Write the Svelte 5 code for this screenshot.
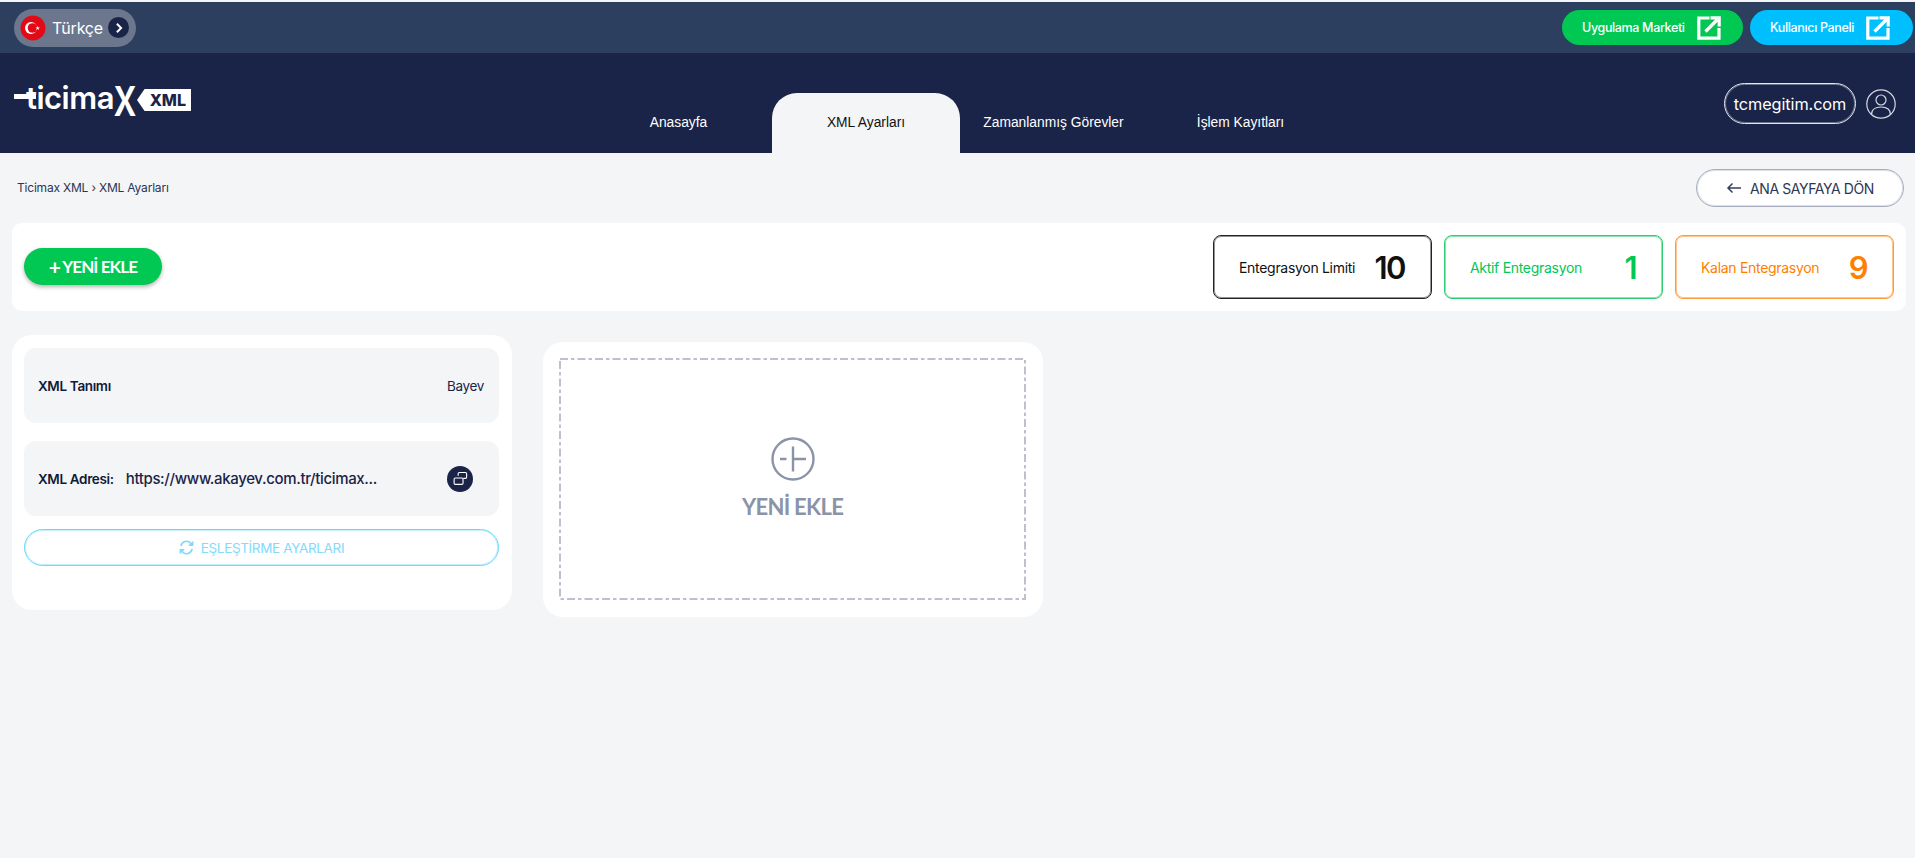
<script>
  const tabs = [
    { label: 'Anasayfa', active: false },
    { label: 'XML Ayarları', active: true },
    { label: 'Zamanlanmış Görevler', active: false },
    { label: 'İşlem Kayıtları', active: false }
  ];
  const stats = [
    { label: 'Entegrasyon Limiti', value: '10', tone: 'black' },
    { label: 'Aktif Entegrasyon', value: '1', tone: 'green' },
    { label: 'Kalan Entegrasyon', value: '9', tone: 'orange' }
  ];
</script>

<div class="page">
  <div class="topbar">
    <div class="lang">
      <svg class="flag" viewBox="0 0 26 26" aria-hidden="true">
        <circle cx="13" cy="13" r="12.5" fill="#e30a17" />
        <circle cx="11" cy="13" r="6" fill="#fff" />
        <circle cx="12.5" cy="13" r="4.8" fill="#e30a17" />
        <path d="M17.6 10.8l.6 1.6 1.7 0-1.3 1 .5 1.7-1.5-1-1.4 1 .5-1.7-1.3-1 1.7 0z" fill="#fff" />
      </svg>
      <span class="lang-name">Türkçe</span>
      <span class="lang-go">
        <svg viewBox="0 0 20 20" aria-hidden="true"><path d="M7 4l6 6-6 6" fill="none" stroke="#fff" stroke-width="2.8" /></svg>
      </span>
    </div>
    <div class="links">
      <a class="link market" href="#market">
        <span>Uygulama Marketi</span>
        <svg viewBox="0 0 24 24" aria-hidden="true"><path d="M12.500 2H1.800v20.200H22V12M8.500 15.500L21 3M13.500 1.800H22.200V10.500" fill="none" stroke="#fff" stroke-width="3.200" /></svg>
      </a>
      <a class="link panel" href="#panel">
        <span>Kullanıcı Paneli</span>
        <svg viewBox="0 0 24 24" aria-hidden="true"><path d="M12.500 2H1.800v20.200H22V12M8.500 15.500L21 3M13.500 1.800H22.200V10.500" fill="none" stroke="#fff" stroke-width="3.200" /></svg>
      </a>
    </div>
  </div>

  <header class="header">
    <div class="logo">
      <span class="logo-word">ticima<span class="logo-x">x</span></span>
      <span class="logo-tag">XML</span>
    </div>
    <nav class="tabs">
      {#each tabs as tab}
        <a class="tab" class:active={tab.active} href="#tab">{tab.label}</a>
      {/each}
    </nav>
    <div class="account">
      <span class="domain">tcmegitim.com</span>
      <svg class="user" viewBox="0 0 30 30" aria-hidden="true">
        <circle cx="15" cy="15" r="14.200" fill="none" stroke="#d5d8e0" stroke-width="1.200" />
        <circle cx="15" cy="11" r="5" fill="none" stroke="#d5d8e0" stroke-width="1.200" />
        <path d="M5.500 25.500c0-5 4-7.500 9.500-7.500s9.500 2.500 9.500 7.500" fill="none" stroke="#d5d8e0" stroke-width="1.200" />
      </svg>
    </div>
  </header>

  <main class="main">
    <div class="crumbs">
      <span class="trail">Ticimax XML › XML Ayarları</span>
      <button class="back">
        <svg viewBox="0 0 16 12" aria-hidden="true"><path d="M15 6H2M6.500 1.500L2 6l4.500 4.500" fill="none" stroke="#33405f" stroke-width="1.500" /></svg>
        ANA SAYFAYA DÖN
      </button>
    </div>

    <section class="toolbar">
      <button class="add"><span class="add-plus">+</span>YENİ EKLE</button>
      <div class="stats">
        {#each stats as stat}
          <div class="stat {stat.tone}">
            <span class="stat-label">{stat.label}</span>
            <span class="stat-value">{stat.value}</span>
          </div>
        {/each}
      </div>
    </section>

    <section class="cards">
      <article class="card info">
        <div class="row">
          <strong>XML Tanımı</strong>
          <span class="name">Bayev</span>
        </div>
        <div class="row second">
          <strong>XML Adresi:</strong>
          <span class="url">https://www.akayev.com.tr/ticimax...</span>
          <span class="copy">
            <svg viewBox="0 0 16 16" aria-hidden="true">
              <path d="M5.500 5V2.800c0-.7.500-1.200 1.200-1.200h6.600c.7 0 1.200.500 1.200 1.200v3.900c0 .7-.500 1.200-1.200 1.200H11" fill="none" stroke="#fff" stroke-width="1.200" />
              <rect x="1.200" y="7.500" width="9.500" height="6.800" rx="1.300" fill="none" stroke="#fff" stroke-width="1.200" />
            </svg>
          </span>
        </div>
        <button class="match">
          <svg viewBox="0 0 16 16" aria-hidden="true">
            <path d="M2 6.500A6 6 0 0 1 12.500 3.500L14.500 5.500M14.500 1.500v4h-4M14 9.500A6 6 0 0 1 3.500 12.500L1.500 10.500M1.500 14.500v-4h4" fill="none" stroke="#7fd9f9" stroke-width="1.800" />
          </svg>
          EŞLEŞTİRME AYARLARI
        </button>
      </article>

      <article class="card create">
        <div class="dropzone">
          <svg class="frame" viewBox="0 0 467 242" aria-hidden="true">
            <rect x="1" y="1" width="465" height="240" fill="none" stroke="#bcc1cd" stroke-width="2" stroke-dasharray="8 3 3.500 3" />
          </svg>
          <svg class="circle-plus" viewBox="0 0 44 44" aria-hidden="true">
            <circle cx="22" cy="22" r="20.500" fill="none" stroke="#8a93a8" stroke-width="2.400" />
            <path d="M22 9.500v25M9 22h6.500M22 22h13" fill="none" stroke="#8a93a8" stroke-width="2.400" />
          </svg>
          <span class="create-label">YENİ EKLE</span>
        </div>
      </article>
    </section>
  </main>
</div>

<style>
  :global(body) {
    margin: 0;
    background: #f4f5f7;
  }
  .page {
    height: 858px;
    overflow: hidden;
    background: #f4f5f7;
    font-family: Inter, "Noto Sans", sans-serif;
    color: #1a2448;
    padding-top: 2px;
    box-sizing: border-box;
  }
  a { text-decoration: none; }
  button { font-family: inherit; cursor: pointer; }

  .topbar {
    height: 51px;
    background: #2c3f5f;
    display: flex;
    justify-content: space-between;
    align-items: center;
    padding: 0 2px 0 14px;
    box-sizing: border-box;
  }
  .lang {
    width: 122px;
    height: 38px;
    border-radius: 19px;
    background: #6c778e;
    display: flex;
    align-items: center;
    padding: 0 7px 0 6px;
    box-sizing: border-box;
  }
  .flag { width: 26px; height: 26px; flex: none; }
  .lang-name {
    color: #fff;
    font-size: 16px;
    margin-left: 6px;
    flex: 1;
    letter-spacing: -0.2px;
  }
  .lang-go {
    width: 21px;
    height: 21px;
    border-radius: 50%;
    background: #1a2448;
    display: flex;
    align-items: center;
    justify-content: center;
  }
  .lang-go svg { width: 14px; height: 14px; }
  .links { display: flex; gap: 7px; }
  .link {
    height: 35px;
    border-radius: 18px;
    display: flex;
    align-items: center;
    color: #fff;
    font-size: 12.500px;
    font-weight: 500;
    letter-spacing: -0.35px;
    box-sizing: border-box;
    justify-content: space-between;
  }
  .link svg { width: 24px; height: 24px; }
  .market { width: 181px; background: #00c853; padding: 0 22px 0 20px; }
  .panel { width: 163px; background: #00bfff; padding: 0 23px 0 20px; }

  .header {
    height: 100px;
    background: #1a2448;
    position: relative;
    display: flex;
  }
  .logo {
    position: absolute;
    left: 14px;
    top: 32px;
    display: flex;
    align-items: flex-start;
  }
  .logo-word {
    position: relative;
    display: block;
    width: 123px;
    box-sizing: border-box;
    white-space: nowrap;
    color: #fff;
    font-weight: 600;
    font-size: 31px;
    line-height: 10px;
    letter-spacing: -0.5px;
    padding-left: 12px;
  }
  .logo-word::before {
    content: "";
    position: absolute;
    left: 0;
    top: 9px;
    width: 22px;
    height: 5px;
    background: #fff;
  }
  .logo-x {
    display: inline-block;
    font-size: 54px;
    font-weight: 500;
    line-height: 10px;
    margin: 0 -4px;
    transform: translateY(7px) scaleX(0.78);
  }
  .logo-tag {
    margin-top: 4px;
    width: 54px;
    height: 22px;
    background: #fff;
    color: #1a2448;
    font-size: 16px;
    font-weight: 800;
    line-height: 22px;
    text-align: right;
    padding-right: 5px;
    box-sizing: border-box;
    clip-path: polygon(14% 0, 100% 0, 100% 100%, 14% 100%, 0 50%);
  }
  .tabs {
    display: flex;
    margin: 40px 0 0 585px;
    height: 60px;
  }
  .tab {
    width: 187px;
    display: flex;
    align-items: center;
    justify-content: center;
    color: #fff;
    font-family: "Liberation Sans", Arial, sans-serif;
    font-size: 13.800px;
    padding-bottom: 2px;
    box-sizing: border-box;
    border-radius: 25px 25px 0 0;
  }
  .tab.active { width: 188px; background: #f4f5f7; color: #111; }
  .account {
    position: absolute;
    right: 19px;
    top: 30px;
    display: flex;
    align-items: center;
    gap: 10px;
  }
  .domain {
    width: 132px;
    height: 41px;
    border: 1px solid #e4e6ec;
    box-shadow: inset 0 0 0 1px rgba(228, 230, 236, 0.4);
    border-radius: 21px;
    box-sizing: border-box;
    color: #fff;
    font-size: 16.300px;
    display: flex;
    align-items: center;
    justify-content: center;
    letter-spacing: -0.1px;
  }
  .user { width: 30px; height: 30px; }

  .main { padding: 0 9px 0 12px; }
  .crumbs {
    height: 70px;
    display: flex;
    justify-content: space-between;
    align-items: center;
    padding: 0 2px 0 5px;
    font-size: 12px;
    letter-spacing: -0.2px;
    color: #2b3654;
  }
  .trail { margin-bottom: 2px; }
  .back {
    width: 208px;
    height: 38px;
    background: #fff;
    border: 1px solid #a9afc0;
    box-shadow: inset 0 0 0 1px rgba(169, 175, 192, 0.4);
    border-radius: 19px;
    display: flex;
    align-items: center;
    justify-content: center;
    gap: 8px;
    font-size: 14px;
    letter-spacing: -0.4px;
    color: #2b3654;
    padding: 0;
  }
  .back svg { width: 16px; height: 12px; }

  .toolbar {
    height: 88px;
    background: #fff;
    border-radius: 10px;
    display: flex;
    align-items: center;
    justify-content: space-between;
    padding: 0 12px;
  }
  .add {
    width: 138px;
    height: 37px;
    border: 0;
    border-radius: 19px;
    background: #00c853;
    color: #fff;
    font-family: Lato, sans-serif;
    font-weight: 700;
    font-size: 17px;
    letter-spacing: -0.9px;
    box-shadow: 0 2px 4px rgba(0, 0, 0, 0.3);
    display: flex;
    align-items: center;
    justify-content: center;
    padding: 0;
    margin-bottom: 1px;
  }
  .add-plus { font-size: 21px; margin-right: 2px; line-height: 1; font-weight: 700; }
  .stats { display: flex; gap: 12px; }
  .stat {
    width: 219px;
    height: 64px;
    border: 1px solid;
    box-shadow: inset 0 0 0 1px color-mix(in srgb, currentColor 45%, transparent);
    border-radius: 8px;
    box-sizing: border-box;
    display: flex;
    align-items: center;
    justify-content: space-between;
    background: #fff;
    padding: 0 26px 0 25px;
  }
  .stat-label { font-size: 14px; letter-spacing: -0.3px; }
  .stat-value { font-size: 31px; font-weight: 600; letter-spacing: -1.500px; }
  .black { border-color: #222; color: #111; }
  .green { border-color: #2ecb70; color: #00c853; }
  .orange { border-color: #ff9a3c; color: #ff8000; }

  .cards {
    display: flex;
    align-items: flex-start;
    gap: 31px;
    margin-top: 24px;
  }
  .card {
    width: 500px;
    background: #fff;
    border-radius: 20px;
    box-sizing: border-box;
  }
  .info {
    height: 275px;
    padding: 13px 13px 0 12px;
  }
  .create {
    height: 275px;
    margin-top: 7px;
    padding: 16px 17px 17px 16px;
  }
  .row {
    height: 75px;
    border-radius: 12px;
    background: #f4f5f7;
    display: flex;
    align-items: center;
    padding: 0 15px 0 14px;
    justify-content: space-between;
    font-size: 13.500px;
    letter-spacing: -0.35px;
    color: #1a2448;
  }
  .row strong { font-weight: 600; color: #111a38; }
  .second {
    margin-top: 18px;
    justify-content: flex-start;
  }
  .url {
    margin-left: 12px;
    font-size: 15px;
    font-weight: 500;
    flex: 1;
  }
  .copy {
    width: 26px;
    height: 26px;
    border-radius: 50%;
    background: #1a2448;
    display: flex;
    align-items: center;
    justify-content: center;
    margin-right: 11px;
  }
  .copy svg { width: 15px; height: 15px; }
  .match {
    margin-top: 13px;
    width: 100%;
    height: 37px;
    background: #fff;
    border: 1px solid #6fd6fb;
    box-shadow: inset 0 0 0 1px rgba(111, 214, 251, 0.4);
    border-radius: 19px;
    color: #84dafa;
    font-size: 13.500px;
    letter-spacing: -0.35px;
    display: flex;
    align-items: center;
    justify-content: center;
    gap: 7px;
    padding: 0;
  }
  .match svg { width: 15px; height: 15px; }
  .dropzone {
    position: relative;
    height: 242px;
    display: flex;
    flex-direction: column;
    align-items: center;
    justify-content: center;
  }
  .frame {
    position: absolute;
    inset: 0;
    width: 100%;
    height: 100%;
  }
  .circle-plus { width: 44px; height: 44px; }
  .create-label {
    margin-top: 12px;
    font-family: Lato, sans-serif;
    font-weight: 700;
    font-size: 22px;
    line-height: 28px;
    letter-spacing: -0.7px;
    color: #8a93a8;
  }
</style>
